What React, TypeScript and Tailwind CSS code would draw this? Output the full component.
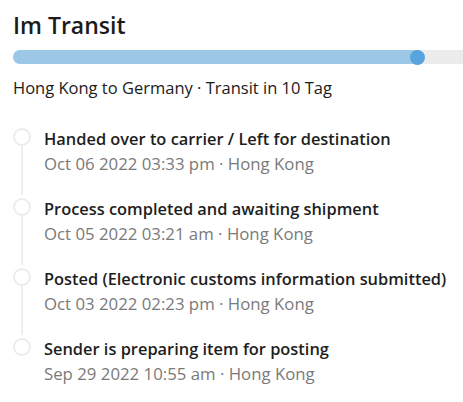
import React from 'react';

type Event = { title: string; time: string; place: string };

const events: Event[] = [
    { title: 'Handed over to carrier / Left for destination', time: 'Oct 06 2022 03:33 pm', place: 'Hong Kong' },
    { title: 'Process completed and awaiting shipment', time: 'Oct 05 2022 03:21 am', place: 'Hong Kong' },
    { title: 'Posted (Electronic customs information submitted)', time: 'Oct 03 2022 02:23 pm', place: 'Hong Kong' },
    { title: 'Sender is preparing item for posting', time: 'Sep 29 2022 10:55 am', place: 'Hong Kong' },
];

const App: React.FC = () => {
    return (
        <div className="w-[463px] h-[402px] overflow-hidden bg-white font-['Open_Sans',sans-serif] text-[#1b1b1b]">
            <div className="pl-[13px] pt-[9px]">
                <h1 className="text-[23px] leading-[32px] font-semibold">Im Transit</h1>

                <div className="mt-[9px] w-[470px] h-[14px] rounded-full bg-[#ececec] relative">
                    <div className="h-full w-[411px] rounded-full bg-[#9cc7e7]" />
                    <div className="absolute left-[397px] top-[-0.5px] w-[15px] h-[15px] rounded-full bg-[#58a5de]" />
                </div>

                <p className="mt-[13px] text-[16.5px] leading-[22px]">Hong Kong to Germany · Transit in 10 Tag</p>

                <ul className="mt-[26px]">
                    {events.map((ev, i) => (
                        <li key={i} className="flex gap-[13px] h-[70px]">
                            <div className="flex flex-col items-center w-[18px] shrink-0 pt-[3px]">
                                <div className="w-[18px] h-[18px] rounded-full border-2 border-[#ececec] bg-white" />
                                {i < events.length - 1 && <div className="w-[2px] flex-1 bg-[#efefef]" />}
                            </div>
                            <div className="mt-[1px]">
                                <div className="text-[16.4px] leading-[25px] font-semibold text-[#1e1e1e] whitespace-nowrap">{ev.title}</div>
                                <div className="text-[16.8px] leading-[25px] text-[#7a7a7a] whitespace-nowrap">{ev.time} · {ev.place}</div>
                            </div>
                        </li>
                    ))}
                </ul>
            </div>
        </div>
    );
};

export default App;
